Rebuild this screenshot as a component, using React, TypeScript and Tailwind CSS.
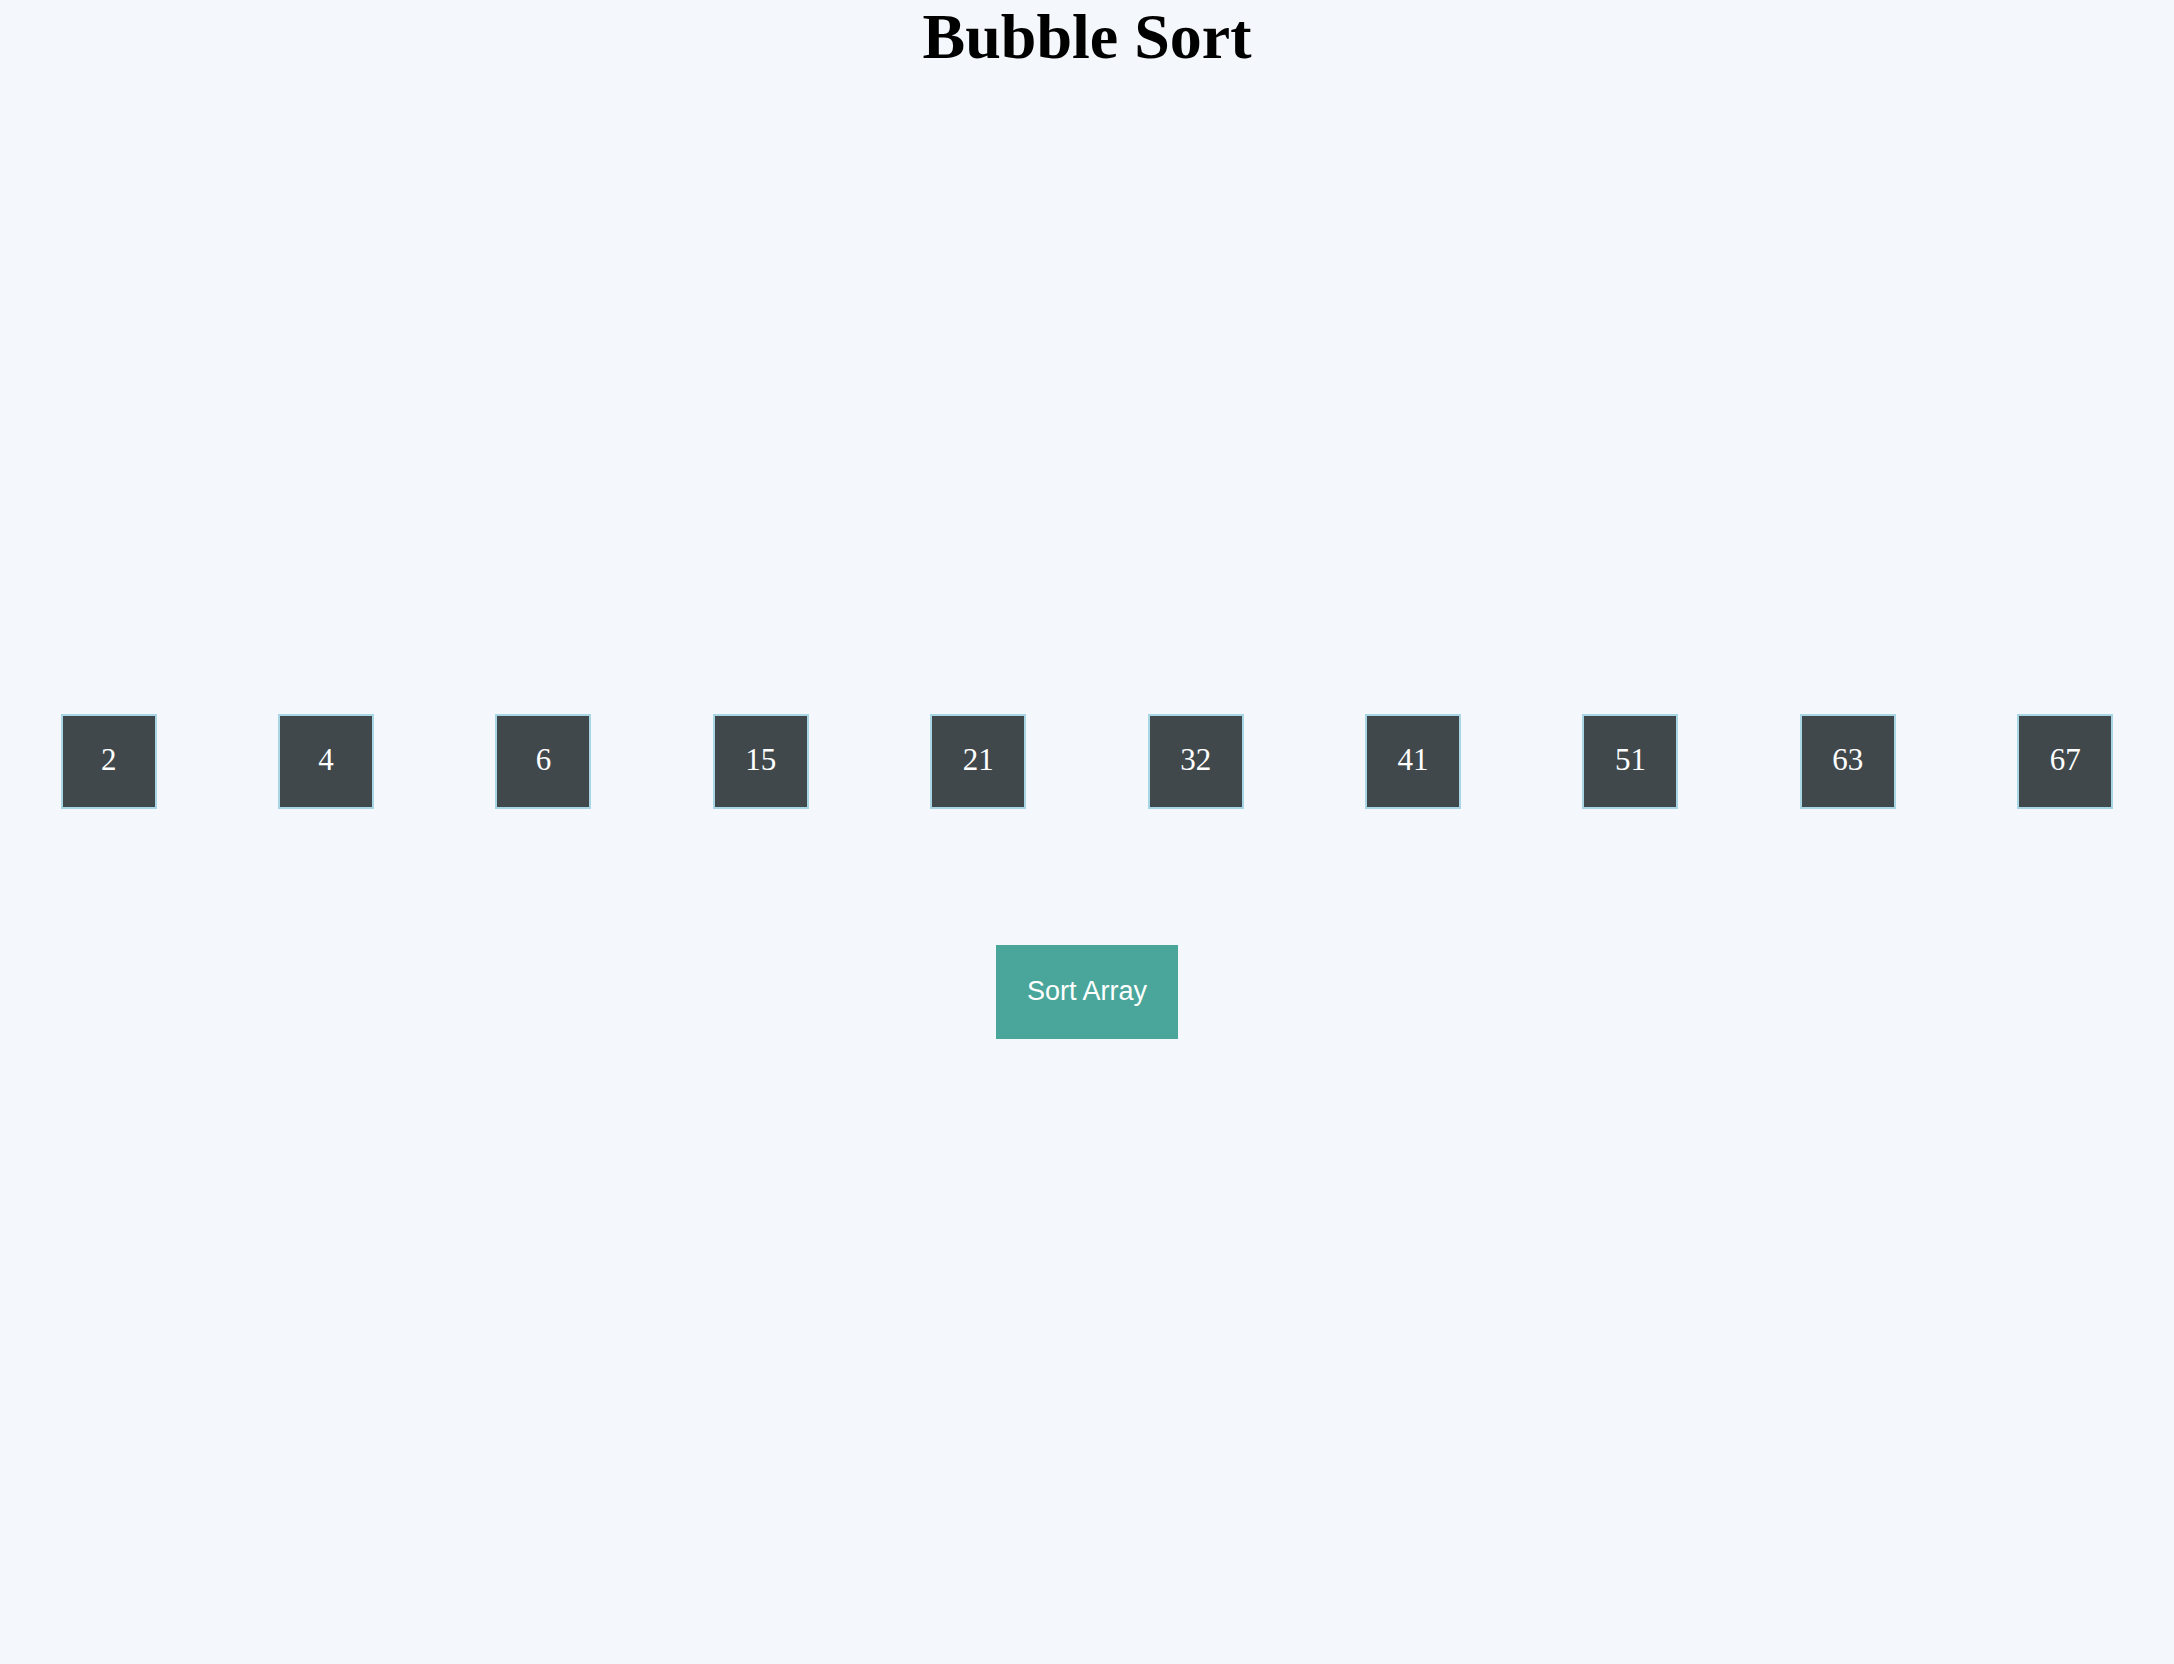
import React, { useState } from 'react';

const initialArray = [2, 4, 6, 15, 21, 32, 41, 51, 63, 67];

export default function App() {
  const [items, setItems] = useState<number[]>(initialArray);

  const handleSort = () => {
    const arr = [...items];
    for (let i = 0; i < arr.length; i++) {
      for (let j = 0; j < arr.length - i - 1; j++) {
        if (arr[j] > arr[j + 1]) {
          const tmp = arr[j];
          arr[j] = arr[j + 1];
          arr[j + 1] = tmp;
        }
      }
    }
    setItems(arr);
  };

  return (
    <div className="min-h-[1664px] w-full bg-[#f4f7fc]">
      {/* Title */}
      <h1 className="m-0 text-center font-['Liberation_Serif',serif] text-[64px] font-bold leading-[74px] text-black">
        Bubble Sort
      </h1>

      {/* Array */}
      <div className="mt-[640px] flex items-center justify-around">
        {items.map((value, idx) => (
          <div
            key={idx}
            className="flex h-[95px] w-[96px] items-center justify-center border-2 border-[#a9d6e5] bg-[#40484c] pb-[3px] font-['Liberation_Serif',serif] text-[31px] text-white"
          >
            {value}
          </div>
        ))}
      </div>

      {/* Action */}
      <div className="mt-[136px] flex justify-center">
        <button
          onClick={handleSort}
          className="h-[94px] w-[182px] bg-[#4aa69a] pb-[2px] font-['Liberation_Sans',sans-serif] text-[27px] text-white"
        >
          Sort Array
        </button>
      </div>
    </div>
  );
}
